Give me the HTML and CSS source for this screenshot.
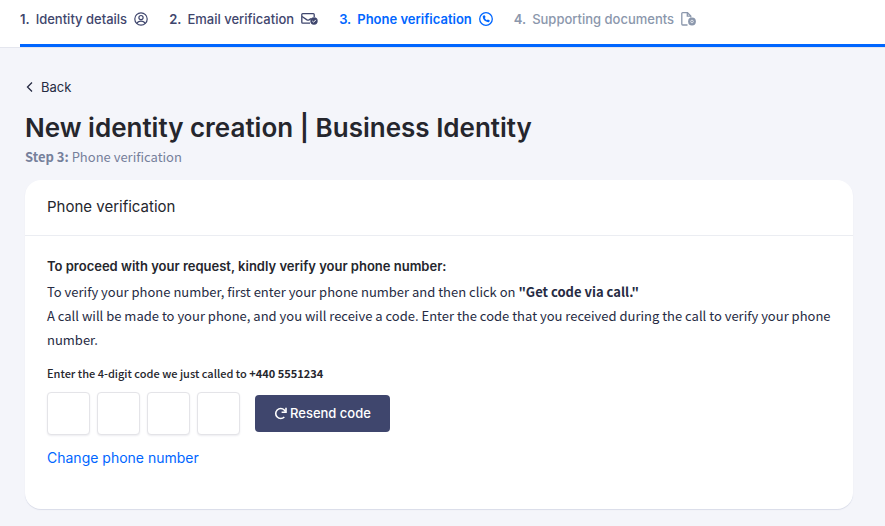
FILE: index.html
```html
<!DOCTYPE html>
<html lang="en">
<head>
  <meta charset="UTF-8">
  <meta name="viewport" content="width=device-width, initial-scale=1.0">
  <title>New identity creation</title>
  <link rel="stylesheet" href="styles.css">
</head>
<body>
  <header class="steps_bar">
    <ol class="steps">
      <li class="step"><b>1.</b> <span>Identity details</span>
        <svg class="step_icon" width="14" height="14" viewBox="0 0 14 14" fill="none" stroke="currentColor" stroke-width="1.2">
          <circle cx="7" cy="7" r="6.2"/>
          <circle cx="7" cy="5.6" r="2.1"/>
          <path d="M3 11.5C3.6 9.8 5 9.2 7 9.2s3.4.6 4 2.3"/>
        </svg>
      </li>
      <li class="step"><b>2.</b> <span>Email verification</span>
        <svg class="step_icon" width="17" height="14" viewBox="0 0 17 14" fill="none" stroke="currentColor" stroke-width="1.3">
          <path d="M9 11.2H1.7a.9.9 0 0 1-.9-.9V2.600a.9.9 0 0 1 .9-.9h10.600a.9.9 0 0 1 .9.9V5"/>
          <path d="M1 4.500l5 3.400q1 .6 2 0l2-1.300"/>
          <circle cx="13" cy="9" r="3.700" fill="currentColor" stroke="none"/>
          <path d="M11.300 9l1.300 1.200 2.200-2.300" stroke="#fff" stroke-width="1"/>
        </svg>
      </li>
      <li class="step active"><b>3.</b> <span>Phone verification</span>
        <svg class="step_icon" width="14" height="14" viewBox="0 0 14 14">
          <circle cx="7" cy="7" r="6.300" fill="none" stroke="currentColor" stroke-width="1.300"/>
          <path fill="currentColor" d="M4.700 3.400l1-.2.900 1.900-.8.900c.4 1 1.100 1.700 2.100 2.200l.9-.8 1.900.9-.2 1c-.1.600-.5 1-1.100.9C6 9.900 3.900 7.600 3.700 4.500c0-.6.400-1 1-1.100z"/>
        </svg>
      </li>
      <li class="step disabled"><b>4.</b> <span>Supporting documents</span>
        <svg class="step_icon" width="15" height="14" viewBox="0 0 15 14" fill="none" stroke="currentColor" stroke-width="1.300">
          <path d="M6.500 13H1.700a.9.9 0 0 1-.9-.9V1.600a.9.9 0 0 1 .9-.9h4.800l3.300 3.300v1.500"/>
          <path d="M6.300.8v3.400h3.400"/>
          <circle cx="11" cy="9.500" r="3.900" fill="currentColor" stroke="none"/>
          <circle cx="11" cy="9.500" r="1.300" stroke="#fff" stroke-width=".7"/>
        </svg>
      </li>
    </ol>
  </header>

  <main class="content">
    <a href="#" class="back">
      <svg width="10" height="12" viewBox="0 0 10 12" fill="none" stroke="currentColor" stroke-width="1.300"><path d="M7 1.500L2.500 6 7 10.500"/></svg>
      Back
    </a>
    <h1>New identity creation | Business Identity</h1>
    <p class="subtitle"><b>Step 3:</b> Phone verification</p>

    <section class="card">
      <h2 class="card_header">Phone verification</h2>
      <form class="card_body">
        <h3>To proceed with your request, kindly verify your phone number:</h3>
        <p class="intro">To verify your phone number, first enter your phone number and then click on <b>"Get code via call."</b><br>
        A call will be made to your phone, and you will receive a code. Enter the code that you received during the call to verify your phone number.</p>
        <p class="code_label" id="code_label">Enter the 4-digit code we just called to <b>+440 5551234</b></p>
        <div class="code_row" role="group" aria-labelledby="code_label">
          <input type="text" class="digit" maxlength="1" inputmode="numeric" aria-label="Digit 1">
          <input type="text" class="digit" maxlength="1" inputmode="numeric" aria-label="Digit 2">
          <input type="text" class="digit" maxlength="1" inputmode="numeric" aria-label="Digit 3">
          <input type="text" class="digit" maxlength="1" inputmode="numeric" aria-label="Digit 4">
          <button type="button" class="resend">
            <svg width="13" height="13" viewBox="0 0 13 13" fill="none" stroke="currentColor" stroke-width="1.600"><path d="M10.300 10A5 5 0 1 1 10.300 3L11.500 4.500"/><path d="M12 .8v4.400H7.600"/></svg>
            Resend code
          </button>
        </div>
        <a href="#" class="change">Change phone number</a>
      </form>
    </section>
  </main>
</body>
</html>
```
FILE: styles.css
```css
* {
  box-sizing: border-box;
}

body {
  margin: 0;
  background-color: #f4f5fa;
  color: #262b43;
  font-family: Inter, sans-serif;
  font-size: 13px;
}

h1, h2, h3, p {
  margin: 0;
}

.steps_bar {
  background-color: #fff;
  border-bottom: 1px solid #e4e6ee;
  padding-left: 20px;
  overflow: hidden;
}

.steps {
  display: flex;
  gap: 21px;
  margin: 0;
  padding: 9px 0 15px;
  list-style: none;
  border-bottom: 3px solid #0066ff;
}

.step {
  display: flex;
  align-items: center;
  gap: 6px;
  color: #3f466d;
  font-weight: 500;
  line-height: 20px;
  white-space: nowrap;
}

.step b {
  font-weight: 600;
}

.step_icon {
  margin-left: 1px;
}

.step.active {
  color: #0066ff;
  font-weight: 600;
}

.step.disabled {
  color: #8b97ac;
}

.content {
  padding: 29px 32px 16px 25px;
}

.back {
  display: flex;
  align-items: center;
  gap: 6px;
  width: fit-content;
  color: #262b43;
  line-height: 20px;
  text-decoration: none;
}

h1 {
  margin-top: 12px;
  color: #25262d;
  font-size: 26px;
  font-weight: 600;
  line-height: 38px;
}

.subtitle {
  color: #76809b;
  font-family: "Noto Sans CJK SC", sans-serif;
  font-size: 13px;
  line-height: 20px;
}

.card {
  margin-top: 13px;
  background-color: #fff;
  border-radius: 16px;
  box-shadow: 0 1px 1px #d9dce8;
}

.card_header {
  padding: 16px 22px 17px;
  border-bottom: 1px solid #ebedf2;
  color: #25262d;
  font-size: 15px;
  font-weight: 400;
  line-height: 22px;
}

.card_body {
  padding: 20px 22px 40px;
}

h3 {
  color: #25262d;
  font-size: 13px;
  font-weight: 600;
  line-height: 20px;
}

.intro {
  margin-top: 4px;
  font-family: "Noto Sans CJK SC", sans-serif;
  font-size: 13px;
  line-height: 24px;
}

.code_label {
  margin-top: 11px;
  color: #25262d;
  font-family: "Noto Sans CJK SC", sans-serif;
  font-size: 11px;
  font-weight: 500;
  line-height: 20px;
}

.code_row {
  display: flex;
  align-items: center;
  gap: 7px;
  margin-top: 9px;
}

.digit {
  width: 43px;
  height: 43px;
  border: 1px solid #e4e4e8;
  border-radius: 4px;
  background-color: #fff;
  box-shadow: 0 1px 2px #ececf0;
  font: inherit;
  text-align: center;
}

.resend {
  display: flex;
  align-items: center;
  gap: 3px;
  margin-left: 8px;
  padding: 8px 19px;
  border: 0;
  border-radius: 4px;
  background-color: #3f466d;
  color: #fff;
  font: 500 13px/21px Inter, sans-serif;
  cursor: pointer;
}

.change {
  display: inline-block;
  margin-top: 12px;
  color: #0066ff;
  font-size: 14px;
  line-height: 22px;
  text-decoration: none;
}
```
